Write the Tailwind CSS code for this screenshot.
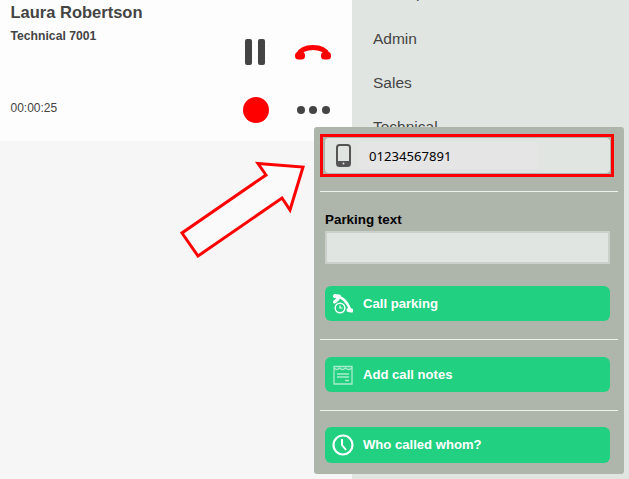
<!DOCTYPE html>
<html lang="en">
<head>
    <meta charset="UTF-8">
    <title>Call panel</title>
    <script src="https://cdn.jsdelivr.net/npm/@tailwindcss/browser@4"></script>
</head>
<body class="bg-[#f6f6f6] font-['Liberation_Sans',sans-serif]">
    <div class="relative flex w-[629px] h-[479px] overflow-hidden">
        <!-- call card -->
        <div class="w-[352px] shrink-0">
            <div class="h-[141px] bg-[#fdfdfd] text-[#444444] pl-[10.5px] pr-[21px] relative">
                <div class="flex h-[141px]">
                    <div class="flex-1 flex flex-col">
                        <h2 class="text-[16.5px] leading-[18px] font-bold mt-[3px]">Laura Robertson</h2>
                        <p class="text-[12.200px] leading-[14px] font-bold mt-[8px]">Technical 7001</p>
                        <p class="text-[12px] leading-[14px] mt-auto mb-[26px]">00:00:25</p>
                    </div>
                    <div class="grid grid-cols-[26px_36px] grid-rows-[28px_28px] gap-x-[26px] gap-y-[30px] mt-[38px] items-center justify-items-center">
                        <div class="flex gap-[6px] -translate-x-px">
                            <span class="w-[7px] h-[26px] rounded-[2px] bg-[#444444]"></span>
                            <span class="w-[7px] h-[26px] rounded-[2px] bg-[#444444]"></span>
                        </div>
                        <svg width="36" height="15" viewBox="0 0 36 15"><path d="M3 10 C6 4 12 2.500 18 2.500 C24 2.500 30 4 33 10" fill="none" stroke="#ff0000" stroke-width="5"/><rect x="0" y="7" width="10" height="7.500" rx="3.500" fill="#ff0000"/><rect x="26" y="7" width="10" height="7.500" rx="3.500" fill="#ff0000"/></svg>
                        <span class="w-[26px] h-[26px] rounded-full bg-[#ff0000]"></span>
                        <div class="flex gap-[4.500px]">
                            <span class="w-[8px] h-[8px] rounded-full bg-[#444444]"></span>
                            <span class="w-[8px] h-[8px] rounded-full bg-[#444444]"></span>
                            <span class="w-[8px] h-[8px] rounded-full bg-[#444444]"></span>
                        </div>
                    </div>
                </div>
            </div>
        </div>

        <!-- groups sidebar -->
        <div class="flex-1 bg-[#e1e5e1] text-[#444444] text-[15.5px] leading-[18px] pl-[21px] -mt-[15px]">
            <div class="h-[44px] leading-[16px]">Backup</div>
            <div class="h-[44px] pt-[1px]">Admin</div>
            <div class="h-[44px] pt-[1px]">Sales</div>
            <div class="h-[44px] pt-[1px]">Technical</div>
        </div>

        <!-- arrow -->
        <svg class="absolute left-[170px] top-[150px]" width="150" height="120" viewBox="0 0 150 120">
            <path d="M12 83 L28 106 L112 48 L120 60 L133 17 L88 13.500 L96 25 Z" fill="#fafafa" stroke="#ff0000" stroke-width="3"/>
        </svg>

        <!-- actions popup -->
        <div class="absolute left-[314px] top-[127px] w-[310px] h-[347px] bg-[#aeb6ac] rounded-[3px] px-[6px] pt-[7px]">
            <div class="w-[294px] h-[43px] border-[3px] border-[#ff0000] p-[1px] pl-[2px]">
                <div class="h-[35px] w-[285px] bg-[#e1e5e1] rounded-[4px] flex items-center">
                    <svg class="ml-[11px]" width="15" height="23" viewBox="0 0 15 23">
                        <rect x="1" y="1" width="13" height="21" rx="2.500" fill="none" stroke="#555555" stroke-width="2"/>
                        <rect x="1" y="17" width="13" height="5" rx="1" fill="#555555"/>
                        <circle cx="7.500" cy="19.500" r="1" fill="#e1e5e1"/>
                    </svg>
                    <div class="ml-[8px] w-[178px] h-[27px] bg-[#e5e5e5] flex items-center pl-[10px] pt-[2px] text-[13.100px] text-black font-['Noto_Sans',sans-serif]">01234567891</div>
                </div>
            </div>
            <div class="h-px bg-[#eef0ee] mt-[14px]"></div>
            <div class="pl-[5px] pr-[8px]">
                <label class="block mt-[20px] text-[13.400px] leading-[16px] font-bold text-black">Parking text</label>
                <div class="mt-[3px] h-[33px] bg-[#e1e5e1] border-2 border-[#cbd0ca]"></div>
                <button class="mt-[22px] w-full h-[35px] bg-[#22d081] rounded-[6px] flex items-center text-white text-[13.100px] font-bold">
                    <svg class="ml-[8px]" width="20" height="20" viewBox="0 0 20 20" fill="none" stroke="#ffffff">
                        <path d="M3 2.500 C10 3 15 9 17.500 17" stroke-width="2.500"/>
                        <path d="M2 2 L6 2.500 M15.500 16 L18.500 16.500" stroke-width="4" stroke-linecap="round"/>
                        <path d="M1.500 8 L5 5" stroke-width="3" stroke-linecap="round"/>
                        <circle cx="7" cy="14" r="4.800" stroke-width="1.500" fill="#22d081"/>
                        <path d="M7 11.500 V14 H9.500" stroke-width="1.200"/>
                    </svg>
                    <span class="ml-[10px]">Call parking</span>
                </button>
            </div>
            <div class="h-px bg-[#eef0ee] mt-[18px]"></div>
            <div class="pl-[5px] pr-[8px]">
                <button class="mt-[17px] w-full h-[35px] bg-[#22d081] rounded-[6px] flex items-center text-white text-[13.100px] font-bold">
                    <svg class="ml-[8px]" width="20" height="20" viewBox="0 0 20 20" fill="none" stroke="#a8eccb" stroke-width="1.300">
                        <path d="M1 1.500 H19 V19 H1 Z"/>
                        <path d="M1 3 Q4 6 6.500 3 Q9.500 6 12.500 3 Q15.500 6 19 3"/>
                        <path d="M4 9 H16 M4 12 H16 M12 15.500 H16"/>
                    </svg>
                    <span class="ml-[10px]">Add call notes</span>
                </button>
            </div>
            <div class="h-px bg-[#eef0ee] mt-[18px]"></div>
            <div class="pl-[5px] pr-[8px]">
                <button class="mt-[16px] w-full h-[36px] bg-[#22d081] rounded-[6px] flex items-center text-white text-[13.100px] font-bold">
                    <svg class="ml-[7px]" width="22" height="22" viewBox="0 0 22 22" fill="none" stroke="#ffffff">
                        <circle cx="11" cy="11" r="9.500" stroke-width="2.200"/>
                        <path d="M10 5 V11 L14 16" stroke-width="2"/>
                    </svg>
                    <span class="ml-[9px]">Who called whom?</span>
                </button>
            </div>
        </div>
    </div>
</body>
</html>
